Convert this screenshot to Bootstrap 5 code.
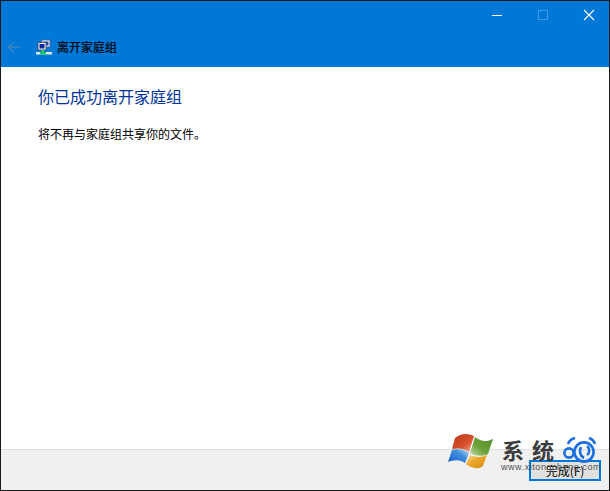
<!doctype html>
<html lang="zh"><head><meta charset="utf-8"><title>离开家庭组</title>
<link href="https://cdn.jsdelivr.net/npm/bootstrap@5.3.0/dist/css/bootstrap.min.css" rel="stylesheet">
<style>
html,body{height:100%;margin:0}
body{font-family:"Noto Sans CJK SC","Liberation Sans",sans-serif;background:#fff;color:#000}
.win{height:491px;width:610px;border:1px solid #1a1a1a;overflow:hidden;position:relative}
.head{height:66px;background:#0078d7;flex:none}
.ctrls{height:31px;margin-right:-3px}
.ctrl{width:46px;height:28px}
.tbar{height:30px;padding-left:6px}
.htitle{font-size:12px;line-height:16px;color:#000;margin-left:5px;-webkit-text-stroke:.2px #000}
.ic-net{margin-left:15px}
.body-pane{padding:18px 37px}
.h-main{font-size:16px;line-height:22px;color:#003399;font-weight:400;margin:0 0 19px}
.p-main{font-size:12px;line-height:16px;margin:0;color:#000}
.foot{height:41px;background:#f0f0f0;border-top:1px solid #dfdfdf;flex:none;padding-right:8px;padding-bottom:9px}
.done{width:72px;height:21px;border:2px solid #0078d7;background:#e1e1e1;font-size:12px;line-height:16px;border-radius:0;padding:0;color:#000}
.mark-w{position:absolute;left:445px;top:429px;pointer-events:none}
.mark-o{position:absolute;left:560px;top:433px;pointer-events:none}
.wm-a{position:absolute;left:501px;top:434px;font-size:22px;line-height:28px;letter-spacing:8px;color:#3c3c3c;font-weight:700;white-space:nowrap}
.wm-b{position:absolute;left:500px;top:461px;font-family:"Liberation Sans",sans-serif;font-size:9px;line-height:10px;letter-spacing:.55px;color:#555;white-space:nowrap}
</style></head><body>
<div class="win d-flex flex-column">
<div class="head">
 <div class="ctrls d-flex justify-content-end">
  <div class="ctrl d-flex align-items-center justify-content-center"><svg width="12" height="12" viewBox="0 0 12 12"><path d="M1 6.5H11" stroke="#fff"/></svg></div>
  <div class="ctrl d-flex align-items-center justify-content-center"><svg width="12" height="12" viewBox="0 0 12 12"><rect x="1.5" y="1.5" width="9" height="9" fill="none" stroke="#3f9ae3"/></svg></div>
  <div class="ctrl d-flex align-items-center justify-content-center"><svg width="12" height="12" viewBox="0 0 12 12"><path d="M1 1L11 11M11 1L1 11" stroke="#fff" stroke-width="1.1"/></svg></div>
 </div>
 <div class="tbar d-flex align-items-center">
  <svg width="14" height="12" viewBox="0 0 14 12"><path d="M13 6H1.5M6.5 1L1.5 6l5 5" fill="none" stroke="#3a83c4" stroke-width="1.5"/></svg>
  <svg class="ic-net" width="16" height="16" viewBox="0 0 16 16">
   <rect x="6" y="1" width="8" height="7" fill="#dfe8f5" stroke="#5a6b8a" stroke-width=".8"/><rect x="7.5" y="2.5" width="5" height="4" fill="#2848b8"/>
   <rect x="2" y="3.5" width="8" height="7.5" fill="#eef2f8" stroke="#39475f" stroke-width=".8"/><rect x="3.5" y="5" width="5" height="4.5" fill="#13279a"/>
   <rect x="5" y="11" width="3" height="2" fill="#18c06a"/>
   <rect x="0" y="13" width="16" height="2.5" fill="#dcebd8"/><rect x="4" y="13" width="6" height="2.5" fill="#1fc76f"/>
  </svg>
  <span class="htitle">离开家庭组</span>
 </div>
</div>
<div class="body-pane flex-grow-1">
 <h1 class="h-main">你已成功离开家庭组</h1>
 <p class="p-main">将不再与家庭组共享你的文件。</p>
</div>
<div class="foot d-flex justify-content-end align-items-end">
 <button type="button" class="btn done">完成(F)</button>
</div>
<svg class="mark-w" width="56" height="46" viewBox="0 0 56 46">
 <defs>
  <linearGradient id="gr" x1="0" y1="0" x2="1" y2="1"><stop offset="0" stop-color="#b8391a"/><stop offset=".6" stop-color="#d9502b"/><stop offset="1" stop-color="#f0b7a0"/></linearGradient>
  <linearGradient id="gg" x1="1" y1="0" x2="0" y2="1"><stop offset="0" stop-color="#4f8a2a"/><stop offset=".6" stop-color="#6fa33b"/><stop offset="1" stop-color="#c8dcae"/></linearGradient>
  <linearGradient id="gb" x1="0" y1="1" x2="1" y2="0"><stop offset="0" stop-color="#1560c8"/><stop offset=".6" stop-color="#3f8fdd"/><stop offset="1" stop-color="#c6dff5"/></linearGradient>
  <linearGradient id="go" x1="1" y1="1" x2="0" y2="0"><stop offset="0" stop-color="#d98a12"/><stop offset=".6" stop-color="#eba92c"/><stop offset="1" stop-color="#f7dfa8"/></linearGradient>
 </defs>
 <path d="M9 8C15 3 22 3 28 6L23 22C18 18 12 18 6 19Z" fill="url(#gr)"/>
 <path d="M29 7C35 12 41 12 47 9L42 24C36 27 29 26 24 23Z" fill="url(#gg)"/>
 <path d="M6 20C12 18 18 19 23 23L19 33C14 29 7 30 2 32Z" fill="url(#gb)"/>
 <path d="M24 25C29 27 35 28 41 25L37 36C32 40 25 38 20 34Z" fill="url(#go)"/>
</svg>
<div class="wm-a">系统</div>
<svg class="mark-o" width="36" height="32" viewBox="0 0 36 32" fill="none" stroke="#1a6fe0" stroke-width="2.6">
 <circle cx="8" cy="19" r="4.6"/>
 <circle cx="23" cy="18" r="9.6"/>
 <path d="M20 13c-2 4-1 9 3 11M26 12c3 2 3 7 0 9"/>
 <path d="M7 10C8 7 10 5 14 4M28 4c3 1 5 3 6 6"/>
</svg>
<div class="wm-b">www.xitongcheng.com</div>
</div>
</body></html>
